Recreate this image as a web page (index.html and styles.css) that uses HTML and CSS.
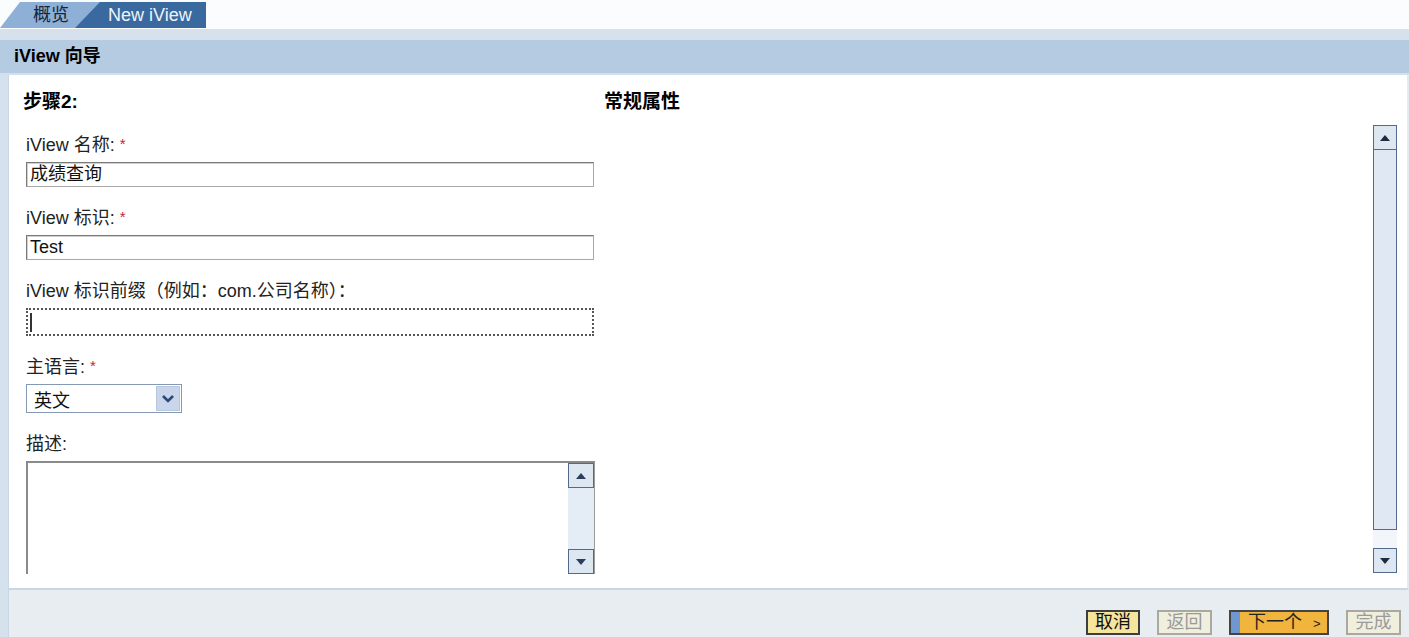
FILE: index.html
```html
<!DOCTYPE html>
<html lang="zh">
<head>
<meta charset="utf-8">
<title>iView 向导</title>
<link rel="stylesheet" href="styles.css">
</head>
<body>
<div class="page">
  <div class="tabs">
    <div class="tab tab-overview">概览</div>
    <div class="tab tab-active">New iView</div>
  </div>
  <div class="band"></div>
  <div class="titlebar">iView 向导</div>
  <div class="body">
    <div class="gutter"></div>
    <div class="content">
      <div class="panel">
        <div class="viewport">
          <div class="form">
            <div class="col-left">
              <div class="step">步骤2:</div>
              <div class="group">
                <div class="label">iView 名称: <span class="req">*</span></div>
                <div class="input">成绩查询</div>
              </div>
              <div class="group">
                <div class="label">iView 标识: <span class="req">*</span></div>
                <div class="input">Test</div>
              </div>
              <div class="group">
                <div class="label">iView 标识前缀（例如：com.公司名称）：</div>
                <div class="input input-focus"><span class="caret"></span></div>
              </div>
              <div class="group">
                <div class="label">主语言: <span class="req">*</span></div>
                <div class="select">
                  <span class="select-text">英文</span>
                  <span class="select-btn">
                    <svg width="14" height="10" viewBox="0 0 14 10"><path d="M2 2 L7 7 L12 2" fill="none" stroke="#2c4a78" stroke-width="2.6"/></svg>
                  </span>
                </div>
              </div>
              <div class="group">
                <div class="label">描述:</div>
                <div class="textarea">
                  <div class="ta-body"></div>
                  <div class="ta-scroll">
                    <div class="sbtn"><svg width="12" height="8" viewBox="0 0 12 8"><path d="M1 7 L6 1 L11 7 Z" fill="#2c3e5c"/></svg></div>
                    <div class="ta-track"></div>
                    <div class="sbtn"><svg width="12" height="8" viewBox="0 0 12 8"><path d="M1 1 L6 7 L11 1 Z" fill="#2c3e5c"/></svg></div>
                  </div>
                </div>
              </div>
            </div>
            <div class="col-right">
              <div class="step">常规属性</div>
            </div>
          </div>
          <div class="vscroll">
            <div class="sbtn"><svg width="12" height="8" viewBox="0 0 12 8"><path d="M1 7 L6 1 L11 7 Z" fill="#1e2a40"/></svg></div>
            <div class="thumb"></div>
            <div class="track-rest"></div>
            <div class="sbtn"><svg width="12" height="8" viewBox="0 0 12 8"><path d="M1 1 L6 7 L11 1 Z" fill="#1e2a40"/></svg></div>
          </div>
        </div>
      </div>
      <div class="footer">
        <div class="btn btn-cancel">取消</div>
        <div class="btn btn-disabled">返回</div>
        <div class="btn btn-next"><span class="next-stripe"></span><span class="next-text">下一个 <span class="gt">&gt;</span></span></div>
        <div class="btn btn-disabled">完成</div>
      </div>
    </div>
  </div>
</div>
</body>
</html>
```
FILE: styles.css
```css
* { box-sizing: border-box; }
html, body { margin: 0; padding: 0; }
body {
  font-family: "Liberation Sans", "Noto Sans CJK SC", sans-serif;
  color: #1a1a1a;
  background: #fff;
}
.page {
  width: 1409px;
  height: 637px;
  display: flex;
  flex-direction: column;
  overflow: hidden;
}
.tabs {
  height: 29px;
  display: flex;
  align-items: flex-end;
  background: #fbfcfd;
  padding-bottom: 1px;
}
.tab {
  height: 26px;
  font-size: 18px;
  line-height: 26px;
  padding-left: 33px;
}
.tab-overview {
  width: 100px;
  background: #8eafd6;
  color: #13263f;
  clip-path: polygon(20px 0, 100% 0, 100% 100%, 0 100%);
}
.tab-active {
  width: 131px;
  margin-left: -25px;
  background: #3a699f;
  color: #eef4fb;
  clip-path: polygon(25px 0, 100% 0, 100% 100%, 0 100%);
}
.band {
  height: 11px;
  background: #d6e1ed;
}
.titlebar {
  height: 35px;
  background: #b4cbe2;
  border-bottom: 2px solid #d3e0ec;
  padding-left: 14px;
  font-size: 18px;
  font-weight: bold;
  line-height: 33px;
  color: #000;
}
.body {
  flex: 1;
  display: flex;
  min-height: 0;
}
.gutter {
  width: 8px;
  background: #d5e1ed;
}
.content {
  flex: 1;
  display: flex;
  flex-direction: column;
  background: #e8edf2;
  border-left: 1px solid #c9d7e5;
}
.panel {
  height: 515px;
  background: #fff;
  border-bottom: 2px solid #c8d7e6;
  border-right: 2px solid #e3eaf2;
  padding-bottom: 14px;
}
.viewport {
  height: 499px;
  overflow: hidden;
  display: flex;
}
.form {
  flex: 1;
  display: flex;
  padding-left: 14px;
  padding-top: 15px;
}
.col-left {
  width: 581px;
}
.col-right {
  flex: 1;
}
.step {
  font-size: 19px;
  font-weight: bold;
  height: 24px;
  line-height: 24px;
  color: #000;
  margin-bottom: 20px;
}
.group {
  padding-left: 3px;
  margin-bottom: 20px;
}
.label {
  font-size: 18px;
  height: 22px;
  line-height: 22px;
  color: #222;
  margin-bottom: 6px;
  white-space: nowrap;
}
.req {
  color: #c8232c;
  font-size: 15px;
  line-height: 1;
  vertical-align: 2px;
}
.input {
  width: 568px;
  height: 25px;
  border: 1px solid #7a7a7a;
  border-right-color: #a8a8a8;
  border-bottom-color: #a8a8a8;
  box-shadow: inset 1px 1px 0 #d0d0d0;
  font-size: 18px;
  line-height: 22px;
  padding-left: 3px;
  color: #111;
  background: #fff;
}
.input-focus {
  height: 28px;
  border: 2px dotted #555;
  box-shadow: none;
  display: flex;
  align-items: center;
  padding-left: 2px;
}
.caret {
  width: 2px;
  height: 19px;
  background: #333;
}
.select {
  width: 156px;
  height: 29px;
  border: 1px solid #8599b5;
  display: flex;
  align-items: center;
  justify-content: space-between;
  padding: 1px;
  background: #fff;
}
.select-text {
  font-size: 18px;
  padding-left: 6px;
  color: #111;
}
.select-btn {
  width: 24px;
  height: 25px;
  background: #c9d5ea;
  border: 1px solid #b9c7de;
  display: flex;
  align-items: center;
  justify-content: center;
}
.textarea {
  width: 569px;
  height: 140px;
  border-top: 2px solid #8a8a8a;
  border-left: 2px solid #8a8a8a;
  border-right: 1px solid #9a9a9a;
  display: flex;
}
.ta-body { flex: 1; }
.ta-scroll {
  width: 26px;
  background: #e4ecf5;
  display: flex;
  flex-direction: column;
}
.ta-track { height: 61px; }
.sbtn {
  height: 25px;
  border: 1px solid #55698a;
  background: #dde7f2;
  display: flex;
  align-items: center;
  justify-content: center;
  flex: none;
}
.vscroll {
  width: 24px;
  margin-right: 10px;
  margin-top: 50px;
  display: flex;
  flex-direction: column;
  height: 448px;
  background: #f2f6fa;
}
.thumb {
  height: 380px;
  border: 1px solid #55698a;
  border-top: none;
  background: #e0e9f3;
}
.track-rest { flex: 1; }
.footer {
  flex: 1;
  display: flex;
  justify-content: flex-end;
  align-items: flex-start;
  padding-top: 20px;
  padding-right: 8px;
  gap: 17px;
}
.btn {
  height: 25px;
  font-size: 18px;
  line-height: 21px;
  text-align: center;
  border: 2px solid #4a4a4a;
}
.btn-cancel {
  width: 54px;
  background: #f6e59d;
  color: #111;
  border-color: #3e3e3e;
}
.btn-disabled {
  width: 55px;
  background: #f0eedc;
  border-color: #a9a9a2;
  color: #9a9a9a;
}
.btn-next {
  width: 100px;
  background: #f1b43c;
  color: #222;
  display: flex;
  border-color: #444;
}
.next-stripe {
  width: 9px;
  background: #6f98d0;
}
.next-text {
  flex: 1;
  text-align: left;
  padding-left: 8px;
}
.gt {
  font-size: 13px;
  padding-left: 6px;
}
```
